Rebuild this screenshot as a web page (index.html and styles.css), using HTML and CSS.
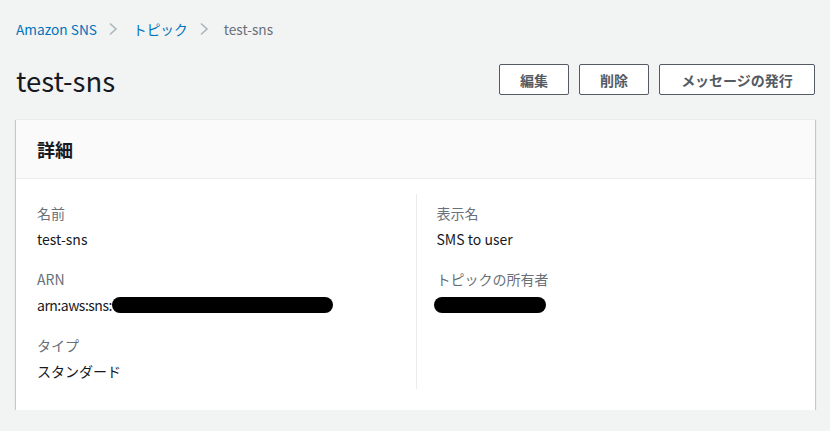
FILE: index.html
```html
<!DOCTYPE html>
<html lang="ja">
<head>
    <meta charset="UTF-8">
    <meta name="viewport" content="width=device-width, initial-scale=1.0">
    <title>test-sns</title>
    <link rel="stylesheet" href="styles.css">
</head>
<body>
    <nav class="breadcrumbs">
        <a href="#">Amazon SNS</a>
        <span class="chevron"><svg width="10" height="14" viewBox="0 0 10 14"><path d="M2 1.5 L8 7 L2 12.5" fill="none" stroke="#aab7b8" stroke-width="1.6"/></svg></span>
        <a href="#">トピック</a>
        <span class="chevron"><svg width="10" height="14" viewBox="0 0 10 14"><path d="M2 1.5 L8 7 L2 12.5" fill="none" stroke="#aab7b8" stroke-width="1.6"/></svg></span>
        <span class="current">test-sns</span>
    </nav>

    <div class="page-header">
        <h1>test-sns</h1>
        <div class="actions">
            <button class="btn btn-edit">編集</button>
            <button class="btn btn-delete">削除</button>
            <button class="btn btn-publish">メッセージの発行</button>
        </div>
    </div>

    <!-- 詳細パネル -->
    <div class="card">
        <div class="card-header">
            <h2>詳細</h2>
        </div>
        <div class="card-body">
            <div class="column">
                <div class="item">
                    <div class="label">名前</div>
                    <div class="value">test-sns</div>
                </div>
                <div class="item">
                    <div class="label">ARN</div>
                    <div class="value"><span class="arn-text">arn:aws:sns:</span><span class="redacted arn"></span></div>
                </div>
                <div class="item">
                    <div class="label">タイプ</div>
                    <div class="value">スタンダード</div>
                </div>
            </div>
            <div class="column column-right">
                <div class="item">
                    <div class="label">表示名</div>
                    <div class="value">SMS to user</div>
                </div>
                <div class="item">
                    <div class="label">トピックの所有者</div>
                    <div class="value"><span class="redacted owner"></span></div>
                </div>
            </div>
        </div>
    </div>
</body>
</html>
```

FILE: styles.css
```css
* {
    margin: 0;
    padding: 0;
    box-sizing: border-box;
}

body {
    background-color: #f2f3f3;
    font-family: 'Noto Sans CJK JP', 'Noto Sans', sans-serif;
    font-size: 14px;
    line-height: 22px;
    color: #16191f;
    padding: 18px 15px 0 16px;
}

.breadcrumbs {
    display: flex;
    align-items: center;
    height: 22px;
    font-size: 13.7px;
}

.breadcrumbs a {
    color: #0073bb;
    text-decoration: none;
}

.chevron {
    display: flex;
    margin: 0 15px 0 11px;
}

.current {
    color: #687078;
}

.page-header {
    display: flex;
    justify-content: space-between;
    align-items: center;
    margin-top: 22px;
}

h1 {
    font-size: 27.5px;
    font-weight: 400;
    line-height: 36px;
}

.actions {
    display: flex;
    gap: 10px;
    margin-top: -1px;
}

.btn {
    font-family: inherit;
    font-size: 14px;
    font-weight: bold;
    color: #545b64;
    background-color: #fff;
    border: 1px solid #545b64;
    border-radius: 2px;
    height: 31px;
}

.btn-edit, .btn-delete {
    width: 70px;
}

.btn-publish {
    width: 156px;
}

.card {
    margin-top: 21px;
    background-color: #fff;
    border-top: 1px solid #eaeded;
    box-shadow: 0 1px 1px 0 rgba(0, 28, 36, 0.3), 1px 1px 1px 0 rgba(0, 28, 36, 0.15), -1px 1px 1px 0 rgba(0, 28, 36, 0.15);
}

.card-header {
    background-color: #fafafa;
    border-bottom: 1px solid #eaeded;
    height: 59px;
    display: flex;
    align-items: center;
    padding: 0 21px;
}

.card-header h2 {
    font-size: 18px;
    font-weight: bold;
    line-height: 22px;
}

.card-body {
    display: grid;
    grid-template-columns: 1fr 1fr;
    padding: 15px 20px 21px;
}

.column {
    padding: 8px 0 0 1px;
    height: 195px;
}

.column-right {
    border-left: 1px solid #eaeded;
    padding-left: 20px;
}

.item {
    margin-bottom: 18px;
}

.label {
    color: #687078;
    margin-bottom: 4px;
}

.value {
    display: flex;
    align-items: center;
    height: 22px;
}

.arn-text {
    letter-spacing: -0.5px;
}

.redacted {
    display: inline-block;
    background-color: #000;
    border-radius: 8px;
    height: 16px;
}

.arn {
    width: 221px;
}

.owner {
    width: 112px;
    margin-left: -3px;
}
```
